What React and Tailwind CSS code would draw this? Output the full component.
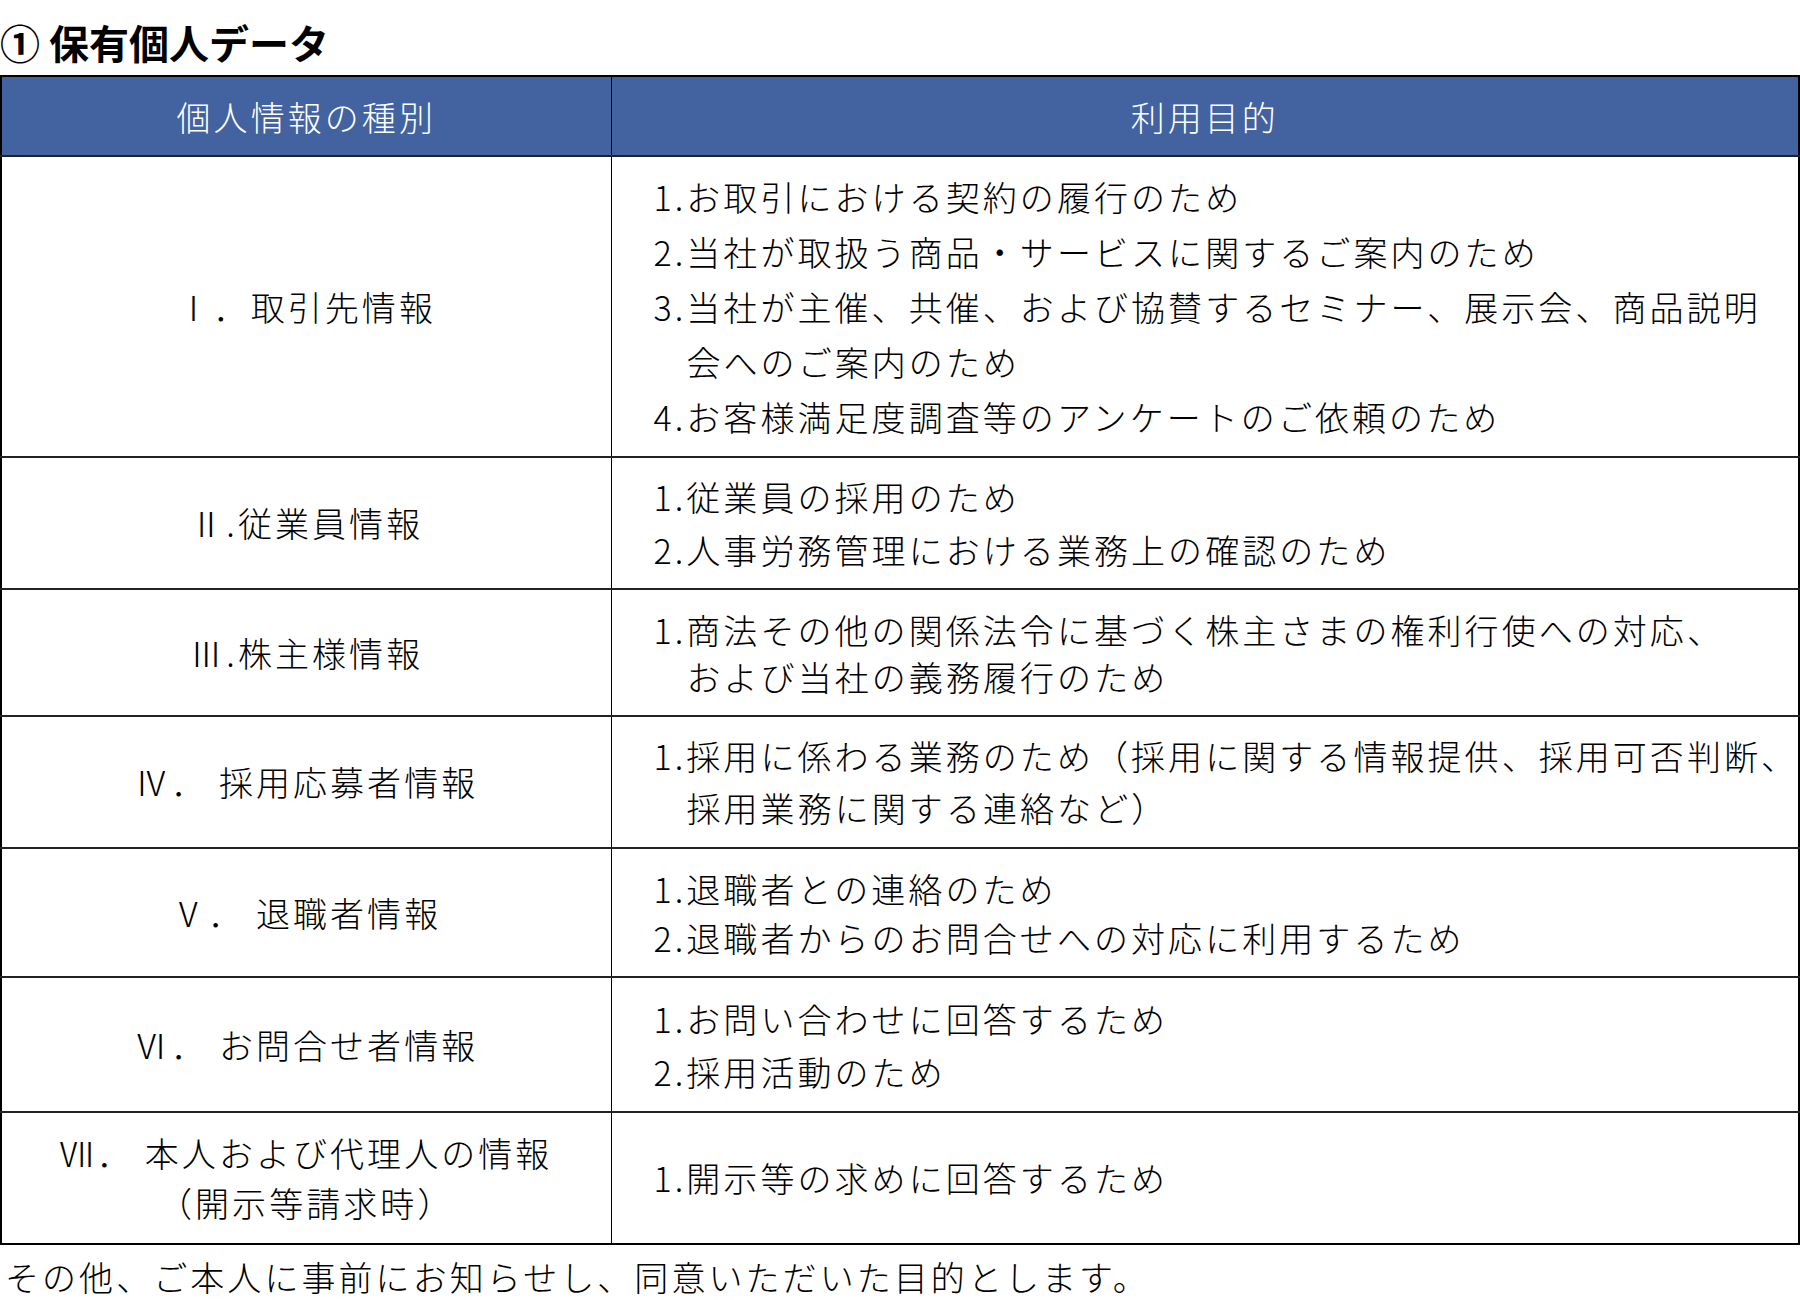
import React from "react";

const rows = [
  {
    label: ["Ⅰ．取引先情報"],
    h: "h-[301px]",
    lh: "leading-[55px]",
    lines: [
      ["1.", "お取引における契約の履行のため"],
      ["2.", "当社が取扱う商品・サービスに関するご案内のため"],
      ["3.", "当社が主催、共催、および協賛するセミナー、展示会、商品説明"],
      ["", "会へのご案内のため"],
      ["4.", "お客様満足度調査等のアンケートのご依頼のため"],
    ],
  },
  {
    label: ["Ⅱ.従業員情報"],
    h: "h-[132px]",
    lh: "leading-[53px]",
    lines: [
      ["1.", "従業員の採用のため"],
      ["2.", "人事労務管理における業務上の確認のため"],
    ],
  },
  {
    label: ["Ⅲ.株主様情報"],
    h: "h-[127px]",
    lh: "leading-[47px]",
    lines: [
      ["1.", "商法その他の関係法令に基づく株主さまの権利行使への対応、"],
      ["", "および当社の義務履行のため"],
    ],
  },
  {
    label: ["Ⅳ． 採用応募者情報"],
    h: "h-[132px]",
    lh: "leading-[52px]",
    lines: [
      ["1.", "採用に係わる業務のため（採用に関する情報提供、採用可否判断、"],
      ["", "採用業務に関する連絡など）"],
    ],
  },
  {
    label: ["Ⅴ． 退職者情報"],
    h: "h-[129px]",
    lh: "leading-[49px]",
    lines: [
      ["1.", "退職者との連絡のため"],
      ["2.", "退職者からのお問合せへの対応に利用するため"],
    ],
  },
  {
    label: ["Ⅵ． お問合せ者情報"],
    h: "h-[135px]",
    lh: "leading-[53px]",
    lines: [
      ["1.", "お問い合わせに回答するため"],
      ["2.", "採用活動のため"],
    ],
  },
  {
    label: ["Ⅶ． 本人および代理人の情報", "（開示等請求時）"],
    h: "h-[132px]",
    lh: "leading-[50px]",
    lines: [["1.", "開示等の求めに回答するため"]],
  },
];

const App = () => {
  return (
    <div className="w-[1800px] h-[1300px] bg-white text-black font-['Noto_Sans_CJK_JP',sans-serif]">
      <h1 className="h-[75px] flex items-center pt-[8px] text-[40px] font-bold leading-none">
        ① 保有個人データ
      </h1>

      <table className="w-full table-fixed border-collapse border-2 border-black text-[34px] tracking-[0.09em] font-light">
        <colgroup>
          <col className="w-[610px]" />
          <col />
        </colgroup>
        <thead>
          <tr className="h-[80px] bg-[#4262a0] text-white">
            <th className="font-light border-r border-black">個人情報の種別</th>
            <th className="font-light">利用目的</th>
          </tr>
        </thead>
        <tbody>
          {rows.map((row, i) => (
            <tr key={i} className={`${row.h} border-t-2 border-[#222]`}>
              <td className="text-center border-r border-black leading-[50px] whitespace-nowrap">
                {row.label.map((l, j) => (
                  <div key={j}>{l}</div>
                ))}
              </td>
              <td className={`pl-[42px] ${row.lh} whitespace-nowrap`}>
                {row.lines.map(([num, text], j) => (
                  <div key={j} className={num ? "" : "pl-[33px]"}>
                    {num}
                    {text}
                  </div>
                ))}
              </td>
            </tr>
          ))}
        </tbody>
      </table>

      <p className="pl-[5px] pt-[12px] text-[34px] tracking-[0.09em] leading-[40px] font-light">
        その他、ご本人に事前にお知らせし、同意いただいた目的とします。
      </p>
    </div>
  );
};

export default App;
